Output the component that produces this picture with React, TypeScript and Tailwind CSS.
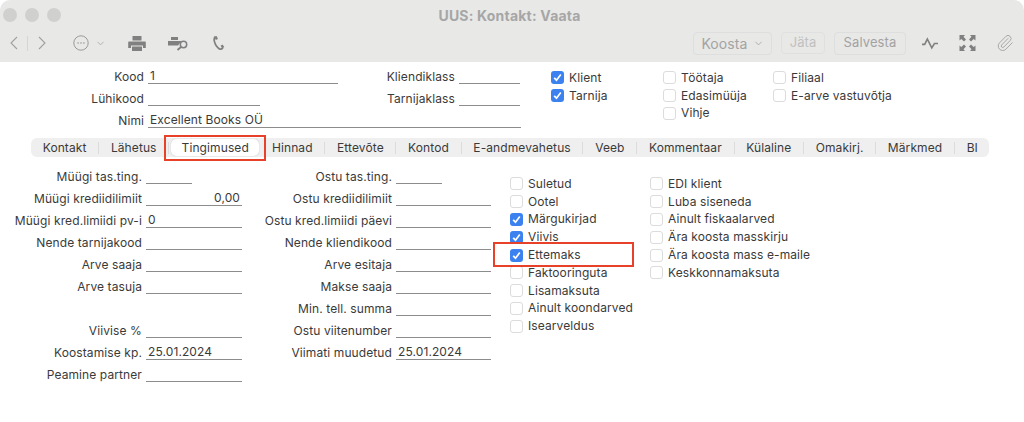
import React from 'react';
import { ChevronDown, Paperclip } from 'lucide-react';

const font = { fontFamily: 'Inter, "Liberation Sans", sans-serif' };

// underlined field, label sits left of it, right aligned
const Field = ({ label, value, labelW, w, right }: { label?: string; value?: string; labelW: string; w: string; right?: boolean }) => (
  <div className="flex h-[22px] items-start">
    <div className={`${labelW} pt-[1px] text-right leading-[16px] whitespace-nowrap`}>{label}</div>
    <div className={`${w} ml-[4px] h-[16px] border-b border-[#8c8c8c] px-[2px] pt-[1px] leading-[14px] ${right ? 'text-right' : ''}`}>{value}</div>
  </div>
);

const Check = ({ label, on }: { label: string; on?: boolean }) => (
  <div className="flex h-[17.8px] items-center gap-[5px] whitespace-nowrap leading-[16px]">
    {on ? (
      <div className="flex size-[13px] items-center justify-center rounded-[3px] bg-[#3b82f0]">
        <svg width="9" height="9" viewBox="0 0 9 9" fill="none" stroke="white" strokeWidth="1.7"><path d="M1.2 4.8 3.5 7.2 7.8 1.6" /></svg>
      </div>
    ) : (
      <div className="size-[13px] rounded-[3px] border border-[#dcdcdc] bg-white" />
    )}
    <span>{label}</span>
  </div>
);

const Tab = ({ label, last }: { label: string; last?: boolean }) => (
  <div className={`flex h-[12px] shrink-0 items-center px-[11.7px] whitespace-nowrap ${last ? '' : 'border-r border-[#dcdcdc]'}`}>{label}</div>
);

const leftRows = [
  ['Müügi tas.ting.', '', 'w-[46px]'],
  ['Müügi krediidilimiit', '0,00', 'w-[96px]'],
  ['Müügi kred.limiidi pv-i', '0', 'w-[96px]'],
  ['Nende tarnijakood', '', 'w-[96px]'],
  ['Arve saaja', '', 'w-[96px]'],
  ['Arve tasuja', '', 'w-[96px]'],
];
const leftRows2 = [
  ['Viivise %', ''],
  ['Koostamise kp.', '25.01.2024'],
  ['Peamine partner', ''],
];
const midRows = [
  ['Ostu tas.ting.', '', 'w-[46px]'],
  ['Ostu krediidilimiit', '', 'w-[95px]'],
  ['Ostu kred.limiidi päevi', '', 'w-[95px]'],
  ['Nende kliendikood', '', 'w-[95px]'],
  ['Arve esitaja', '', 'w-[95px]'],
  ['Makse saaja', '', 'w-[95px]'],
  ['Min. tell. summa', '', 'w-[95px]'],
  ['Ostu viitenumber', '', 'w-[95px]'],
  ['Viimati muudetud', '25.01.2024', 'w-[95px]'],
];

export default function App() {
  return (
    <div className="h-[422px] w-[1024px] overflow-hidden bg-white text-[12px] tracking-[0.1px] text-[#3a3a3a]" style={font}>
      {/* title bar + toolbar */}
      <div className="h-[62px] rounded-t-[10px] bg-[#e8e8e7] pr-[10px] pl-[3px]">
        <div className="flex h-[30px] items-center gap-[8px]">
          <div className="size-[14px] rounded-full bg-[#d0d0cf]" />
          <div className="size-[14px] rounded-full bg-[#d0d0cf]" />
          <div className="size-[14px] rounded-full bg-[#d0d0cf]" />
          <div className="flex-1 pr-[64px] text-center text-[14px] font-bold tracking-[0.2px] text-[#a6a6a6]">UUS: Kontakt: Vaata</div>
        </div>
        <div className="flex h-[26px] items-center text-[#9a9a9a]">
          <svg className="ml-[7px]" width="8" height="14" viewBox="0 0 8 14" fill="none" stroke="#a0a0a0" strokeWidth="1.1"><path d="M7 1 1 7l6 6" /></svg>
          <div className="ml-[9px] h-[15px] w-px bg-[#d5d5d5]" />
          <svg className="ml-[10px]" width="8" height="14" viewBox="0 0 8 14" fill="none" stroke="#a0a0a0" strokeWidth="1.1"><path d="m1 1 6 6-6 6" /></svg>
          <svg className="ml-[27px]" width="16" height="16" viewBox="0 0 16 16" fill="none" stroke="#9a9a9a"><circle cx="8" cy="8" r="7.2" /><path d="M4.500 8h1.200M7.400 8h1.200M10.300 8h1.200" strokeWidth="1.300" /></svg>
          <ChevronDown size={11} strokeWidth={1.5} className="ml-[6px]" />
          <svg className="ml-[22px]" width="18" height="15" viewBox="0 0 18 15" fill="#808080"><path d="M4.500 0h9v4.500h-9zM1 5.500h16a.8.8 0 0 1 .8.8V12H15V9.500H3V12H.2V6.300A.8.800 0 0 1 1 5.500zM4 10.500h10V15H4z" /></svg>
          <svg className="ml-[21px]" width="24" height="15" viewBox="0 0 24 15"><path d="M4 1h7v3H4zM1 5h13v1.500a5 5 0 0 0-2.800 3H1z" fill="#808080" /><circle cx="16.500" cy="8.500" r="3.200" fill="none" stroke="#808080" strokeWidth="1.500" /><path d="M14 11l-3.500 3" stroke="#808080" strokeWidth="1.800" /></svg>
          <svg className="ml-[22px]" width="12" height="18" viewBox="0 0 14 18" fill="none" stroke="#808080" strokeWidth="2"><path d="M3 1.500c-1.500 1-2 2.500-1.500 5 .7 3.500 2.500 7 6 9.500 1.500.6 3 0 4-1.500" /><path d="M3 1.500 4.500 5M10 11.500l2 3" strokeWidth="2.800" /></svg>
          <div className="flex-1" />
          <div className="flex h-[23px] w-[79px] items-center justify-center gap-[5px] rounded-[4px] border border-[#dedede] text-[14px] text-[#a3a3a3]">Koosta<ChevronDown size={11} strokeWidth={1.8} /></div>
          <div className="ml-[9px] flex h-[22px] w-[44px] items-center justify-center rounded-[4px] border border-[#e0e0e0] text-[13px] text-[#c0c0c0]">Jäta</div>
          <div className="ml-[9px] flex h-[23px] w-[72px] items-center justify-center rounded-[4px] border border-[#dedede] text-[13px] text-[#a3a3a3]">Salvesta</div>
          <svg className="ml-[16px]" width="16" height="13" viewBox="0 0 18 14" fill="none" stroke="#808080" strokeWidth="1.800"><path d="M0 8h3l3-6 5 10 3-5h4" /></svg>
          <svg className="ml-[21px]" width="17" height="16" viewBox="0 0 16 16" fill="#808080"><path d="M0 0h5.500L4 1.800 6.500 4.500 4.500 6.500 1.800 4 0 5.500zM16 0v5.500L14.200 4 11.500 6.500 9.500 4.500 12 1.800 10.500 0zM0 16v-5.500L1.800 12l2.700-2.500 2 2L4 14.200 5.500 16zM16 16h-5.500L12 14.200 9.500 11.500l2-2L14.200 12 16 10.500z" /></svg>
          <Paperclip size={18} strokeWidth={1.2} className="ml-[20px] text-[#a0a0a0]" />
        </div>
      </div>

      {/* header fields */}
      <div className="flex pt-[6px]">
        <div className="w-[525px]">
          <div className="flex">
            <Field label="Kood" value="1" labelW="w-[144px]" w="w-[190px]" />
            <div className="ml-[44px]"><Field label="Kliendiklass" labelW="w-[73px]" w="w-[61px]" /></div>
          </div>
          <div className="flex">
            <Field label="Lühikood" labelW="w-[144px]" w="w-[112px]" />
            <div className="ml-[122px]"><Field label="Tarnijaklass" labelW="w-[73px]" w="w-[61px]" /></div>
          </div>
          <Field label="Nimi" value="Excellent Books OÜ" labelW="w-[144px]" w="w-[373px]" />
        </div>
        <div className="ml-[26px] w-[112px] pt-[1px]"><Check label="Klient" on /><Check label="Tarnija" on /></div>
        <div className="w-[110px] pt-[1px]"><Check label="Töötaja" /><Check label="Edasimüüja" /><Check label="Vihje" /></div>
        <div className="pt-[1px]"><Check label="Filiaal" /><Check label="E-arve vastuvõtja" /></div>
      </div>

      {/* tabs */}
      <div className="mt-[4px] ml-[31px] flex h-[19px] w-[958px] items-center rounded-[6px] bg-[#efefef]">
        <Tab label="Kontakt" />
        <Tab label="Lähetus" />
        <div className="relative mr-[1px] ml-[2px] flex h-[17px] w-[88px] shrink-0 items-center justify-center rounded-[5px] bg-white shadow-[0_0_1px_rgba(0,0,0,0.3)]">
          Tingimused
          <div className="absolute top-[-4px] left-[-7px] h-[26px] w-[102px] border-2 border-[#e8412a]" />
        </div>
        <Tab label="Hinnad" />
        <Tab label="Ettevõte" />
        <Tab label="Kontod" />
        <Tab label="E-andmevahetus" />
        <Tab label="Veeb" />
        <Tab label="Kommentaar" />
        <Tab label="Külaline" />
        <Tab label="Omakirj." />
        <Tab label="Märkmed" />
        <Tab label="BI" last />
      </div>

      {/* conditions */}
      <div className="flex pt-[11px]">
        <div className="w-[264px]">
          {leftRows.map(([l, v, w]) => (
            <Field key={l} label={l} value={v} labelW="w-[142px]" w={w} right={v === '0,00'} />
          ))}
          <div className="h-[22px]" />
          {leftRows2.map(([l, v]) => (
            <Field key={l} label={l} value={v} labelW="w-[142px]" w="w-[96px]" />
          ))}
        </div>
        <div className="w-[246px]">
          {midRows.map(([l, v, w]) => (
            <Field key={l} label={l} value={v} labelW="w-[128px]" w={w} />
          ))}
        </div>
        <div className="w-[140px] pt-[7px]">
          <Check label="Suletud" />
          <Check label="Ootel" />
          <Check label="Märgukirjad" on />
          <Check label="Viivis" on />
          <div className="relative">
            <Check label="Ettemaks" on />
            <div className="absolute top-[-4px] left-[-17px] h-[25px] w-[141px] border-2 border-[#e8412a]" />
          </div>
          <Check label="Faktooringuta" />
          <Check label="Lisamaksuta" />
          <Check label="Ainult koondarved" />
          <Check label="Isearveldus" />
        </div>
        <div className="pt-[7px]">
          <Check label="EDI klient" />
          <Check label="Luba siseneda" />
          <Check label="Ainult fiskaalarved" />
          <Check label="Ära koosta masskirju" />
          <Check label="Ära koosta mass e-maile" />
          <Check label="Keskkonnamaksuta" />
        </div>
      </div>
    </div>
  );
}
